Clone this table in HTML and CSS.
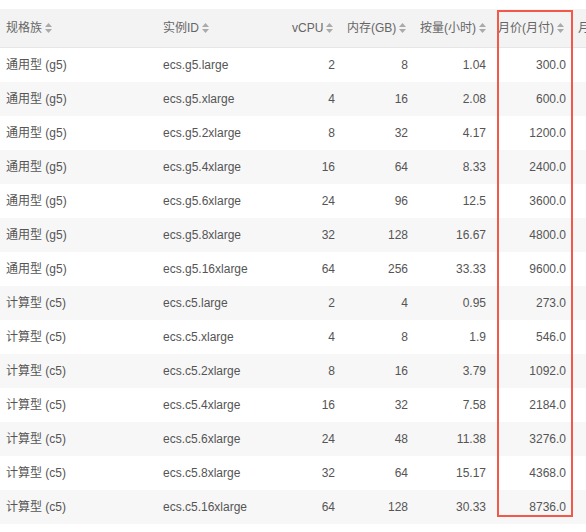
FILE: index.html
```html
<!DOCTYPE html>
<html lang="zh-CN">
<head>
    <meta charset="UTF-8">
    <meta name="viewport" content="width=device-width, initial-scale=1.0">
    <title>实例规格价格</title>
    <link rel="stylesheet" href="styles.css">
</head>
<body>

    <div class="table-wrap">
        <table class="price-table">
            <colgroup>
                <col class="col-family">
                <col class="col-id">
                <col class="col-cpu">
                <col class="col-mem">
                <col class="col-hour">
                <col class="col-month">
                <col class="col-year">
            </colgroup>
            <thead>
                <tr>
                    <th>规格族<svg class="sort" viewBox="0 0 7 10"><path d="M0 4 3.5 0 7 4Z M0 6 7 6 3.5 10Z"/></svg></th>
                    <th>实例ID<svg class="sort" viewBox="0 0 7 10"><path d="M0 4 3.5 0 7 4Z M0 6 7 6 3.5 10Z"/></svg></th>
                    <th class="num">vCPU<svg class="sort" viewBox="0 0 7 10"><path d="M0 4 3.5 0 7 4Z M0 6 7 6 3.5 10Z"/></svg></th>
                    <th class="num">内存(GB)<svg class="sort" viewBox="0 0 7 10"><path d="M0 4 3.5 0 7 4Z M0 6 7 6 3.5 10Z"/></svg></th>
                    <th class="num">按量(小时)<svg class="sort" viewBox="0 0 7 10"><path d="M0 4 3.5 0 7 4Z M0 6 7 6 3.5 10Z"/></svg></th>
                    <th class="num">月价(月付)<svg class="sort" viewBox="0 0 7 10"><path d="M0 4 3.5 0 7 4Z M0 6 7 6 3.5 10Z"/></svg></th>
                    <th>月价(年付)<svg class="sort" viewBox="0 0 7 10"><path d="M0 4 3.5 0 7 4Z M0 6 7 6 3.5 10Z"/></svg></th>
                </tr>
            </thead>
            <tbody>
                <tr><td>通用型 (g5)</td><td>ecs.g5.large</td><td class="num">2</td><td class="num">8</td><td class="num">1.04</td><td class="num">300.0</td><td></td></tr>
                <tr><td>通用型 (g5)</td><td>ecs.g5.xlarge</td><td class="num">4</td><td class="num">16</td><td class="num">2.08</td><td class="num">600.0</td><td></td></tr>
                <tr><td>通用型 (g5)</td><td>ecs.g5.2xlarge</td><td class="num">8</td><td class="num">32</td><td class="num">4.17</td><td class="num">1200.0</td><td></td></tr>
                <tr><td>通用型 (g5)</td><td>ecs.g5.4xlarge</td><td class="num">16</td><td class="num">64</td><td class="num">8.33</td><td class="num">2400.0</td><td></td></tr>
                <tr><td>通用型 (g5)</td><td>ecs.g5.6xlarge</td><td class="num">24</td><td class="num">96</td><td class="num">12.5</td><td class="num">3600.0</td><td></td></tr>
                <tr><td>通用型 (g5)</td><td>ecs.g5.8xlarge</td><td class="num">32</td><td class="num">128</td><td class="num">16.67</td><td class="num">4800.0</td><td></td></tr>
                <tr><td>通用型 (g5)</td><td>ecs.g5.16xlarge</td><td class="num">64</td><td class="num">256</td><td class="num">33.33</td><td class="num">9600.0</td><td></td></tr>
                <tr><td>计算型 (c5)</td><td>ecs.c5.large</td><td class="num">2</td><td class="num">4</td><td class="num">0.95</td><td class="num">273.0</td><td></td></tr>
                <tr><td>计算型 (c5)</td><td>ecs.c5.xlarge</td><td class="num">4</td><td class="num">8</td><td class="num">1.9</td><td class="num">546.0</td><td></td></tr>
                <tr><td>计算型 (c5)</td><td>ecs.c5.2xlarge</td><td class="num">8</td><td class="num">16</td><td class="num">3.79</td><td class="num">1092.0</td><td></td></tr>
                <tr><td>计算型 (c5)</td><td>ecs.c5.4xlarge</td><td class="num">16</td><td class="num">32</td><td class="num">7.58</td><td class="num">2184.0</td><td></td></tr>
                <tr><td>计算型 (c5)</td><td>ecs.c5.6xlarge</td><td class="num">24</td><td class="num">48</td><td class="num">11.38</td><td class="num">3276.0</td><td></td></tr>
                <tr><td>计算型 (c5)</td><td>ecs.c5.8xlarge</td><td class="num">32</td><td class="num">64</td><td class="num">15.17</td><td class="num">4368.0</td><td></td></tr>
                <tr><td>计算型 (c5)</td><td>ecs.c5.16xlarge</td><td class="num">64</td><td class="num">128</td><td class="num">30.33</td><td class="num">8736.0</td><td></td></tr>
            </tbody>
        </table>

        <!-- Highlight around the monthly price column -->
        <div class="highlight"></div>
    </div>

</body>
</html>
```

FILE: styles.css
```css
html, body {
    margin: 0;
    background: #fff;
    overflow: hidden;
}
body {
    font-family: "Liberation Sans", "Noto Sans CJK SC", sans-serif;
    font-size: 12px;
    color: #555;
    padding-top: 9px;
}
.table-wrap {
    position: relative;
    width: 586px;
    overflow: hidden;
}
.price-table {
    width: 652px;
    table-layout: fixed;
    border-collapse: collapse;
}
.col-family { width: 157px; }
.col-id { width: 129px; }
.col-cpu { width: 55px; }
.col-mem { width: 73px; }
.col-hour { width: 78px; }
.col-month { width: 80px; }
.col-year { width: 80px; }

th, td {
    padding: 0 6px;
    text-align: left;
    white-space: nowrap;
    line-height: 16px;
    vertical-align: middle;
}
th {
    height: 38px;
    background-color: #f3f3f3;
    border-bottom: 1px solid #e6e6e6;
    font-weight: normal;
    color: #666;
}
td {
    height: 34px;
}
tbody tr:nth-child(even) td {
    background-color: #f7f7f7;
}
.num {
    text-align: right;
}
.sort {
    width: 7px;
    height: 10px;
    margin: 0 3px 0 3px;
    vertical-align: -1px;
    fill: #aaa;
}
/* Red annotation box */
.highlight {
    position: absolute;
    left: 497px;
    top: 1px;
    width: 76px;
    height: 507px;
    box-sizing: border-box;
    border: 2px solid #f3594b;
}
```
